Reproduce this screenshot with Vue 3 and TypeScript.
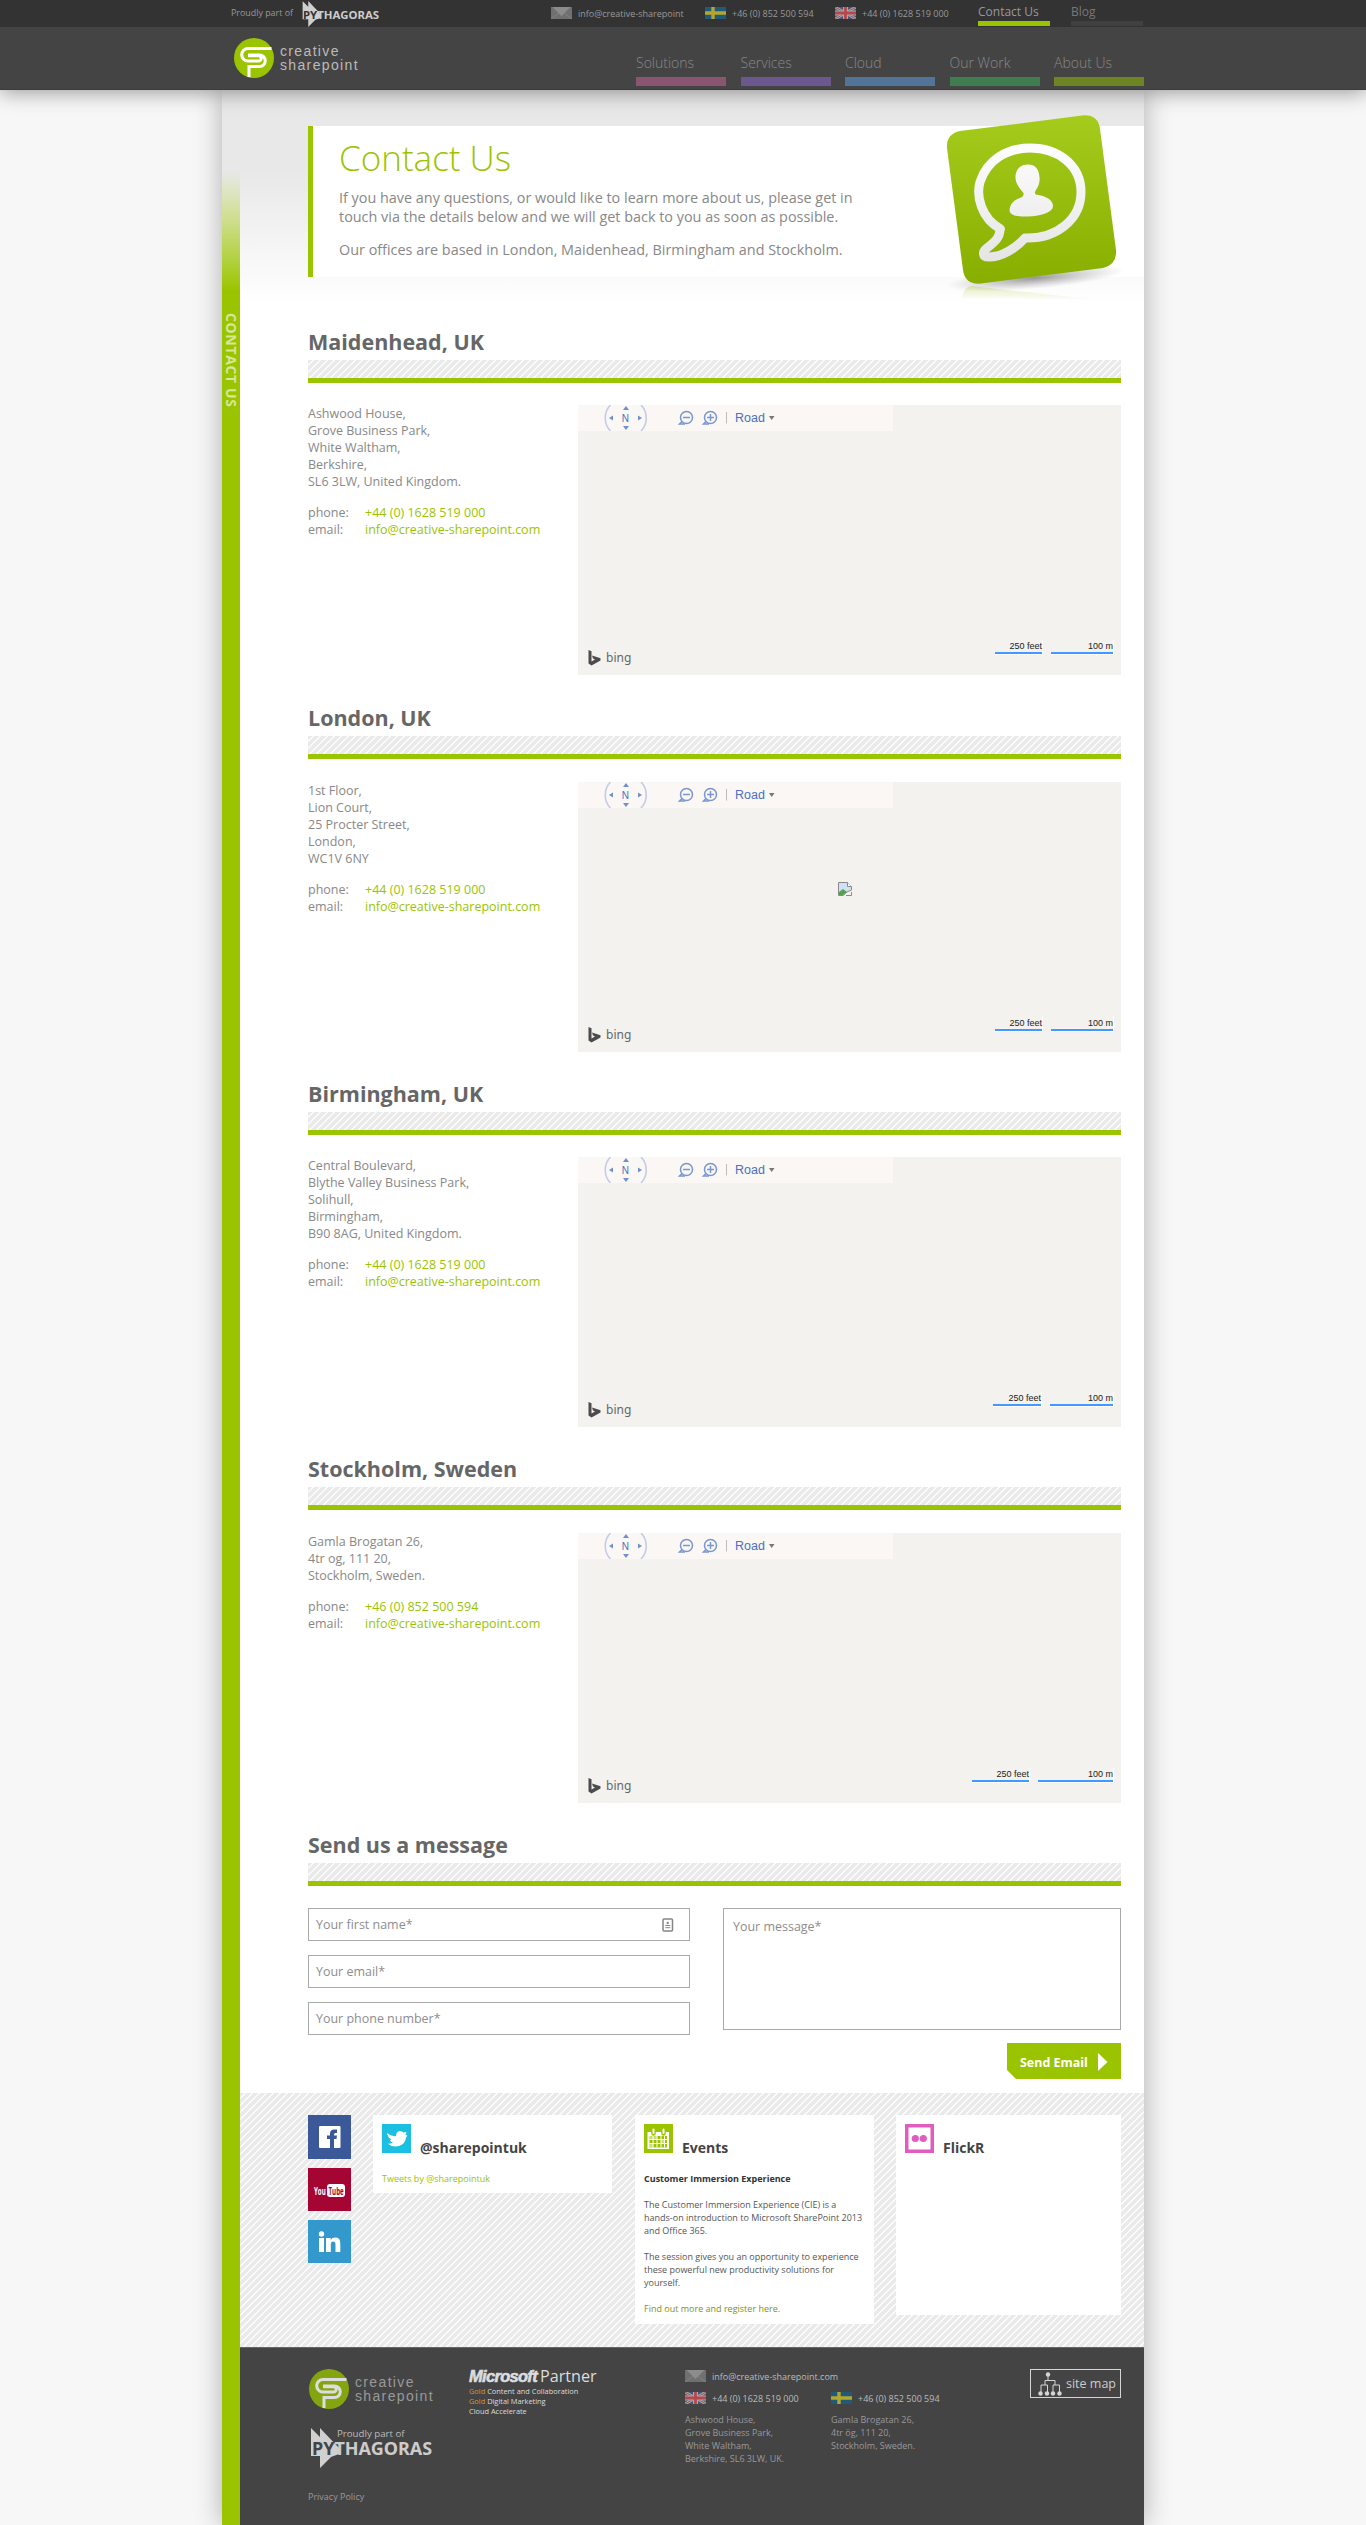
<script setup lang="ts">
interface Office {
  title: string
  address: string[]
  phone: string
  feet: number
  metres: number
  broken?: boolean
}

const offices: Office[] = [
  { title: 'Maidenhead, UK', address: ['Ashwood House,', 'Grove Business Park,', 'White Waltham,', 'Berkshire,', 'SL6 3LW, United Kingdom.'], phone: '+44 (0) 1628 519 000', feet: 47, metres: 62 },
  { title: 'London, UK', address: ['1st Floor,', 'Lion Court,', '25 Procter Street,', 'London,', 'WC1V 6NY'], phone: '+44 (0) 1628 519 000', feet: 47, metres: 62, broken: true },
  { title: 'Birmingham, UK', address: ['Central Boulevard,', 'Blythe Valley Business Park,', 'Solihull,', 'Birmingham,', 'B90 8AG, United Kingdom.'], phone: '+44 (0) 1628 519 000', feet: 48, metres: 63 },
  { title: 'Stockholm, Sweden', address: ['Gamla Brogatan 26,', '4tr og, 111 20,', 'Stockholm, Sweden.'], phone: '+46 (0) 852 500 594', feet: 57, metres: 75 },
]

const nav = [
  { label: 'Solutions', color: '#8a5570' },
  { label: 'Services', color: '#6c578f' },
  { label: 'Cloud', color: '#527497' },
  { label: 'Our Work', color: '#3f7d50' },
  { label: 'About Us', color: '#6f8422' },
]
</script>

<template>
  <svg width="0" height="0" class="defs">
    <symbol id="mail" viewBox="0 0 21 12">
      <rect width="21" height="12" fill="#707070" />
      <path d="M0 12L8 6M21 12L13 6" stroke="#858585" stroke-width=".8" />
      <path d="M1.5 0H19.5L10.5 9Z" fill="#8c8c8c" />
    </symbol>
    <symbol id="se" viewBox="0 0 21 12">
      <rect width="21" height="12" fill="#20597a" />
      <path d="M8 0V12M0 6H21" stroke="#b5a62b" stroke-width="3.4" />
    </symbol>
    <symbol id="uk" viewBox="0 0 21 12">
      <rect width="21" height="12" fill="#3c5a80" />
      <path d="M0 0L21 12M21 0L0 12" stroke="#a9a9a9" stroke-width="2.8" />
      <path d="M0 0L21 12M21 0L0 12" stroke="#b04c50" stroke-width="1" />
      <path d="M10.5 0V12M0 6H21" stroke="#a9a9a9" stroke-width="5" />
      <path d="M10.5 0V12M0 6H21" stroke="#b8474c" stroke-width="2.8" />
    </symbol>
    <symbol id="arrow" viewBox="0 0 28 40">
      <path d="M0 0L9 9V0L28 20V26L20 29L9 40V28H0Z" />
    </symbol>
    <symbol id="sp" viewBox="0 0 40 40">
      <circle cx="20" cy="20" r="20" />
      <path d="M37.500 10.500H14a6.300 6.300 0 0 0 0 12.600H24.500a2.700 2.700 0 0 0 0-5.400H14M14 17H25.500a5.600 5.600 0 0 1 0 11.500H15V39" fill="none" stroke="currentColor" stroke-width="3" />
    </symbol>
  </svg>

  <header class="top">
    <div class="bar">
      <span class="part">Proudly part of</span>
      <span class="pyth">
        <svg class="pa" viewBox="0 0 28 40"><use href="#arrow" fill="#cfcfcf" /></svg>
        <b><i>PY</i>THAGORAS</b>
      </span>
      <span class="c c1"><svg><use href="#mail" /></svg><span>info@creative-sharepoint</span></span>
      <span class="c c2"><svg><use href="#se" /></svg><span>+46 (0) 852 500 594</span></span>
      <span class="c c3"><svg><use href="#uk" /></svg><span>+44 (0) 1628 519 000</span></span>
      <span class="tab on">Contact Us</span>
      <span class="tab">Blog</span>
    </div>
    <div class="nav">
      <div class="logo">
        <svg width="40" height="40" viewBox="0 0 40 40" fill="#9bc400" color="#fff"><use href="#sp" /></svg>
        <div>creative<br>sharepoint</div>
      </div>
      <a v-for="n in nav" :key="n.label" :style="{ borderColor: n.color }">{{ n.label }}</a>
    </div>
  </header>

  <div class="page">
    <div class="rail"><span>CONTACT US</span></div>
    <main>
      <section class="hero">
        <h1>Contact Us</h1>
        <p>If you have any questions, or would like to learn more about us, please get in<br>touch via the details below and we will get back to you as soon as possible.</p>
        <p>Our offices are based in London, Maidenhead, Birmingham and Stockholm.</p>
        <svg class="badge" width="200" height="200" viewBox="0 0 200 200">
          <defs>
            <linearGradient id="gg" x1="0" y1="0" x2="0" y2="1"><stop offset="0" stop-color="#a5cb1d" /><stop offset="1" stop-color="#88ae00" /></linearGradient>
            <linearGradient id="gw" gradientUnits="userSpaceOnUse" x1="0" y1="40" x2="0" y2="160"><stop offset="0" stop-color="#fcfcfc" /><stop offset="1" stop-color="#e2e2e2" /></linearGradient>
            <radialGradient id="sh"><stop offset="0" stop-color="#555" stop-opacity=".6" /><stop offset="1" stop-color="#888" stop-opacity="0" /></radialGradient>
            <linearGradient id="rf" x1="0" y1="0" x2="0" y2="1"><stop offset="0" stop-color="#9bc400" stop-opacity=".25" /><stop offset="1" stop-color="#9bc400" stop-opacity="0" /></linearGradient>
          </defs>
          <path d="M22 184Q24 172 32 172Q100 180 165 186Z" fill="url(#rf)" />
          <ellipse cx="95" cy="164" rx="90" ry="11" fill="url(#sh)" transform="rotate(-5 95 164)" />
          <path d="M20 17L142 1.500Q158 0 160 15L176 136Q177 151 163 154L41 169.500Q25 171 23 156L7 34Q6 20 20 17Z" fill="url(#gg)" />
          <path d="M60.500 115C41 104 36 82 40 68C47 46 67 34 90 34C119 34 141 52 141 78C141 105 117 125 85 124C76 134 62 143 49 143C42 143 42 138 47 134C56 127 60 123 60 115Z" fill="none" stroke="url(#gw)" stroke-width="9" stroke-linejoin="round" />
          <path d="M88 50.500C80 50.500 75 56 75.500 64C76 71 81 76 83.500 79C84 81 83 83 80 84C73 86 70 91 69.500 96C69.500 101 76 103 87 102.500C103 102 113 98 113 92C113 86 106 82 96 80.500C94 79 95 78 96 76C99 72 100 67 99.500 63C99 55 95 50.500 88 50.500Z" fill="url(#gw)" />
        </svg>
      </section>

      <section v-for="o in offices" :key="o.title" class="office">
        <h2>{{ o.title }}</h2>
        <div class="rule"></div>
        <div class="row" :class="{ low: o.broken }">
          <div class="info">
            <p><template v-for="l in o.address" :key="l">{{ l }}<br></template></p>
            <dl>
              <dt>phone:</dt><dd>{{ o.phone }}</dd>
              <dt>email:</dt><dd>info@creative-sharepoint.com</dd>
            </dl>
          </div>
          <div class="map">
            <div class="tools">
              <svg width="315" height="26" viewBox="0 0 315 26" fill="none">
                <path d="M32.500 0C25.500 7 25.500 19 32.500 26M63 0C70 7 70 19 63 26" stroke="#c3cde8" stroke-width="1.600" />
                <path d="M48 1L51 5H45ZM48 25L51 21H45ZM31 13L35 10.500V15.500ZM64 13L60 10.500V15.500Z" fill="#7090cc" />
                <g stroke="#7a97d0" stroke-width="1.500"><circle cx="108.500" cy="12.500" r="6" /><path d="M105 12.500H112M104 16.500L101.500 19H107" /><circle cx="132.500" cy="12.500" r="6" /><path d="M129 12.500H136M132.500 9V16M128 16.500L125.500 19H131" /></g>
                <path d="M148.500 7V18.500" stroke="#bbb" /><path d="M191 11H196.500L193.700 15Z" fill="#777" />
                <text x="43.800" y="16.500" font-family="Liberation Sans, sans-serif" font-size="10" fill="#4a70c0">N</text>
                <text x="157" y="17.200" font-family="Liberation Sans, sans-serif" font-size="12.500" fill="#4a70c0">Road</text>
              </svg>
            </div>
            <svg v-if="o.broken" class="broken" width="16" height="16" viewBox="0 0 16 16">
              <path d="M1.500 1.500H10.500L14.500 5.500V9L10 11L6 14.500H1.500Z" fill="#cfe0f7" stroke="#8a8a8a" />
              <path d="M2 14V11L6 8L10 11L6 14Z" fill="#4ca64c" /><path d="M10.500 1.500V5.500H14.500" fill="#fff" stroke="#8a8a8a" />
              <path d="M14.500 11V14.500H9" fill="none" stroke="#8a8a8a" />
            </svg>
            <div class="foot">
              <svg width="14" height="16" viewBox="0 0 14 16"><path d="M.5 0L3.500 1.200V11.500L7 9.500L5 8.500L4 5.500L12.500 8.200V10.500L3.500 15.500L.5 13.500Z" fill="#4c4c4c" /></svg>
              <span class="bing">bing</span>
              <span class="scale" :style="{ width: o.feet + 'px' }">250 feet</span>
              <span class="scale" :style="{ width: o.metres + 'px' }">100 m</span>
            </div>
          </div>
        </div>
      </section>

      <section class="office msg">
        <h2>Send us a message</h2>
        <div class="rule"></div>
        <div class="form">
          <div class="fields">
            <div class="in">Your first name*
              <svg width="12" height="14" viewBox="0 0 12 14"><rect x="1" y="1" width="9.500" height="12" rx="1" fill="#fff" stroke="#858585" stroke-width="1.500" /><circle cx="5.700" cy="5" r="1.200" fill="#858585" /><path d="M3.300 7.500H8.200M3.300 9.700H8.200" stroke="#858585" /></svg>
            </div>
            <div class="in">Your email*</div>
            <div class="in">Your phone number*</div>
          </div>
          <div class="right">
            <div class="area">Your message*</div>
            <div class="send"><span>Send Email</span><svg width="10" height="18" viewBox="0 0 10 18"><path d="M0 0L9.500 9L0 18Z" fill="#fff" /></svg></div>
          </div>
        </div>
      </section>

      <section class="social">
        <div class="icons">
          <svg width="43" height="44" viewBox="0 0 43 44"><rect width="43" height="44" fill="#3b5998" /><rect x="11" y="11" width="21.500" height="22" rx="1" fill="#fff" /><path d="M22 33V24H19V20.500H22V18.500Q22 14.500 26.500 14.500H29V18H27.500Q26 18 26 19.500V20.500H29L28.500 24H26V33Z" fill="#3b5998" /></svg>
          <svg width="43" height="43" viewBox="0 0 43 43"><rect width="43" height="43" fill="#a50533" /><rect x="19" y="16" width="18" height="13" rx="3" fill="#fff" /><g class="yt" font-size="10"><text transform="translate(6 26.500) scale(.62 1)" fill="#fff">You</text><text transform="translate(20.500 26.500) scale(.62 1)" fill="#a50533">Tube</text></g></svg>
          <svg width="43" height="43" viewBox="0 0 43 43"><rect width="43" height="43" fill="#3399cc" /><circle cx="13.500" cy="14" r="2.700" fill="#fff" /><path d="M11 18H16V32H11ZM18 18H22.700V20Q24 17.600 27.500 17.600Q32.300 17.600 32.300 23.500V32H27.500V24.500Q27.500 21.500 25.200 21.500Q22.800 21.500 22.800 24.500V32H18Z" fill="#fff" /></svg>
        </div>
        <div class="card tw">
          <h3><svg width="29" height="29" viewBox="0 0 29 29"><rect width="29" height="29" fill="#1bbfe2" /><path d="M5 9Q10 13 14 12Q14 7.500 18 7Q20 7 21.500 8.500L24.500 8L23.500 11L25.500 11.500L24 13.500Q23.500 20 17 22Q10 23.500 5.500 19.500Q9 20 11 18.500Q8.500 18 8 16L9.500 15.500Q6 14 5 9Z" fill="#fff" /></svg>@sharepointuk</h3>
          <p class="lime">Tweets by @sharepointuk</p>
        </div>
        <div class="card ev">
          <h3><svg width="29" height="29" viewBox="0 0 29 29"><rect width="29" height="29" fill="#9bc400" /><path d="M3.500 8H25V25H3.500Z" fill="#fff" /><path d="M5.500 12H23V23.500H5.500Z" fill="#9bc400" /><path d="M5.500 12H9V15.500H5.500ZM17 16H20.500V19.500H17ZM9 12H13V15H9ZM5.500 19.500H9V23.500H5.500Z" fill="#fff" opacity=".45" /><path d="M5.500 15.500H23M5.500 19.500H23M9 12V23.500M13 12V23.500M17 12V23.500M20.500 12V23.500" stroke="#fff" stroke-width="1" /><path d="M9.500 4.500V9.500M19.500 4.500V9.500" stroke="#9bc400" stroke-width="4.500" stroke-linecap="round" /><path d="M9.500 5.500V9M19.500 5.500V9" stroke="#fff" stroke-width="2" stroke-linecap="round" /></svg>Events</h3>
          <p><b>Customer Immersion Experience</b></p>
          <p>The Customer Immersion Experience (CIE) is a<br>hands-on introduction to Microsoft SharePoint 2013<br>and Office 365.</p>
          <p>The session gives you an opportunity to experience<br>these powerful new productivity solutions for<br>yourself.</p>
          <p class="olive">Find out more and register here.</p>
        </div>
        <div class="card fl">
          <h3><svg width="29" height="29" viewBox="0 0 29 29"><rect width="29" height="29" fill="#e05cc0" /><rect x="3.500" y="3.500" width="22" height="22" fill="#fff" /><circle cx="10.300" cy="14.500" r="3.600" fill="#e05cc0" /><circle cx="18.300" cy="14.500" r="3.600" fill="#e05cc0" /></svg>FlickR</h3>
        </div>
      </section>

      <footer>
        <div class="brand">
          <div class="logo dim">
            <svg width="40" height="40" viewBox="0 0 40 40" fill="#84a510" color="#ddd"><use href="#sp" /></svg>
            <div>creative<br>sharepoint</div>
          </div>
          <div class="pyth big">
            <svg class="pa" viewBox="0 0 28 40"><use href="#arrow" fill="#d0d0d0" /></svg>
            <em>Proudly part of</em>
            <b><i>PY</i>THAGORAS</b>
          </div>
          <a class="priv">Privacy Policy</a>
        </div>
        <div class="ms">
          <div class="mst"><b>Microsoft</b><span>Partner</span></div>
          <div><i>Gold</i> Content and Collaboration</div>
          <div><i>Gold</i> Digital Marketing</div>
          <div>Cloud Accelerate</div>
        </div>
        <div class="addr">
          <div class="c"><svg><use href="#mail" /></svg><span>info@creative-sharepoint.com</span></div>
          <div class="c"><svg><use href="#uk" /></svg><span>+44 (0) 1628 519 000</span></div>
          <p>Ashwood House,<br>Grove Business Park,<br>White Waltham,<br>Berkshire, SL6 3LW, UK.</p>
        </div>
        <div class="addr se">
          <div class="c"><svg><use href="#se" /></svg><span>+46 (0) 852 500 594</span></div>
          <p>Gamla Brogatan 26,<br>4tr ög, 111 20,<br>Stockholm, Sweden.</p>
        </div>
        <div class="map-link">
          <svg width="24" height="24" viewBox="0 0 24 24" fill="none" stroke="#d5d5d5"><path d="M10 4V8M7 13V8.500H17V13M3 20V13H9.500V20M15 20V13H21.500V20" /><g fill="#d5d5d5" stroke="none"><circle cx="10" cy="2.500" r="2.200" /><circle cx="2.500" cy="21.500" r="2.200" /><circle cx="9" cy="21.500" r="2.200" /><circle cx="15" cy="21.500" r="2.200" /><circle cx="21.500" cy="21.500" r="2.200" /></g></svg>
          <span>site map</span>
        </div>
      </footer>
    </main>
  </div>
</template>

<style>
body { background: #f7f7f7; font-family: "Open Sans", sans-serif; }
#app { position: relative; }
</style>

<style scoped>
* { box-sizing: border-box; }
h1, h2, h3, p, dl, dd { margin: 0; }
i, em { font-style: normal; }
.defs { position: absolute; }
.top { position: relative; z-index: 2; height: 90px; background: #444; box-shadow: 0 2px 20px rgba(0, 0, 0, .4); border-bottom: 1px solid #3c3a3c; }
.bar { height: 27px; background: #333; padding-left: 231px; display: flex; color: #999; font-size: 9px; white-space: nowrap; }
.part { width: 71px; line-height: 25px; font-size: 8.900px; }
.pyth { position: relative; width: 249px; }
.pyth .pa { position: absolute; left: 0; top: 1px; width: 19px; height: 26px; }
.pyth b { position: absolute; left: 1px; top: 8px; font: 700 11.400px/13px "Noto Sans", sans-serif; color: #ccc; letter-spacing: 0; }
.pyth b i { color: #333; }
.c { display: flex; align-items: center; }
.c svg { flex: none; width: 21px; height: 12px; margin-right: 6px; }
.bar .c { height: 26px; }
.c1 { width: 154px; }
.c2 { width: 130px; }
.c3 { width: 143px; }
.tab { width: 72px; height: 26px; margin-right: 21px; border-bottom: 5px solid #404040; font-size: 12px; line-height: 23px; color: #777; }
.tab.on { border-color: #9bc400; color: #999; }
.nav { height: 62px; padding: 0 0 0 234px; display: flex; }
.nav a { width: 90px; height: 59px; margin-right: 14.500px; padding-top: 26px; border-bottom: 9px solid; font-size: 14px; line-height: 20px; font-weight: 300; color: #888; }
.logo { display: flex; width: 402px; padding-top: 11px; color: #bbb; font: 14px/14px "Liberation Sans", sans-serif; letter-spacing: 1.350px; }
.logo div { padding: 6px 0 0 6px; }

.page { position: relative; width: 922px; height: 2435px; margin-left: 222px; display: flex; background: linear-gradient(#e8e8e8, #e8e8e8 80px, #fff 215px); box-shadow: 0 0 26px rgba(0, 0, 0, .3); }
.rail { width: 18px; background: linear-gradient(rgba(155, 196, 0, 0) 80px, #9bc400 200px); padding-top: 223px; }
.rail span { display: block; writing-mode: vertical-rl; font-weight: 700; font-size: 14px; line-height: 18px; letter-spacing: .65px; color: rgba(255, 255, 255, .6); }
main { width: 904px; }
.hero { position: relative; margin: 36px 0 0 68px; height: 151px; border-left: 5px solid #9bc400; background: #fff; padding-left: 26px; color: #888; font-size: 14.400px; line-height: 19px; }
.hero h1 { font-weight: 300; font-size: 35px; line-height: 38px; color: #9bc400; padding-top: 13px; margin-bottom: 11px; }
.hero p { margin-bottom: 14px; }
.badge { position: absolute; left: 627px; top: -12px; }

.office { margin-left: 68px; width: 813px; height: 375.750px; }
.hero + .office { margin-top: 48px; }
.office h2 { height: 35px; font-size: 21.500px; line-height: 34px; color: #666; }
.rule { height: 23px; border-bottom: 5px solid #9bc400; }
.rule, .social { background-image: repeating-linear-gradient(135deg, #eaeaea 0, #eaeaea 3px, #fcfcfc 3.500px, #fcfcfc 4.200px, #eaeaea 4.950px); }
.row { display: flex; margin-top: 22.400px; }
.row.low { margin-top: 23px; }
.info { width: 270px; font-size: 12.500px; line-height: 17px; color: #888; }
.info dl { display: grid; grid-template-columns: 57px 1fr; margin-top: 14px; }
.info dd { color: #9bc400; }
.map { position: relative; width: 543px; height: 270px; background: #f3f2ee; display: flex; flex-direction: column; justify-content: space-between; }
.tools { width: 315px; height: 26px; background: #faf7f4; }
.broken { position: absolute; left: 259px; top: 99px; }
.foot { display: flex; align-items: flex-start; height: 25px; padding: 0 7px 0 10px; }
.bing { margin: -1px auto 0 4px; font: 12px/18px "Noto Sans", sans-serif; color: #666; }
.scale { margin: -10px 1px 0 8px; border-bottom: 2px solid #4499ff; box-shadow: 0 1px #fff, 1px 0 #fff; text-align: right; font: 9px/12px "Liberation Sans", sans-serif; color: #222; }

.msg { height: 265px; }
.form { display: flex; margin-top: 22px; gap: 33px; font-size: 12.480px; color: #8d8d8d; }
.fields { width: 382px; }
.in { height: 33px; margin-bottom: 14px; border: 1px solid #aaa; background: #fff; padding: 0 15px 0 7px; line-height: 31px; display: flex; justify-content: space-between; align-items: center; }
.right { width: 398px; }
.area { height: 122px; border: 1px solid #aaa; background: #fff; padding: 9px; line-height: 17px; }
.send { width: 114px; height: 36px; margin: 13px 0 0 auto; display: flex; align-items: center; justify-content: space-between; padding: 2px 13px 0; background: #9bc400; color: #fff; font-weight: 700; font-size: 12.480px; clip-path: polygon(0 0, 100% 0, 100% 100%, 9px 100%, 0 27px); }

.social { height: 254px; padding: 22px 0 0 68px; display: flex; align-items: flex-start; }
.icons { width: 65px; display: flex; flex-direction: column; gap: 9px; }
.icons svg { display: block; }
.yt { font-family: "Open Sans", sans-serif; font-weight: 700; }
.card { width: 239px; margin-right: 23px; background: #fff; padding: 9px; color: #555; font-size: 9px; line-height: 13px; }
.card h3 { display: flex; align-items: flex-start; gap: 9px; font-size: 14px; line-height: 19px; height: 47.500px; color: #444; padding-top: 14px; }
.card h3 svg { margin-top: -14px; }
.card p { margin-bottom: 13.200px; white-space: nowrap; }
.card b { color: #333; }
.tw { height: 78px; }
.ev { height: 209px; margin-right: 22px; }
.fl { width: 225px; height: 200px; margin: 0; }
.lime { color: #9bc400; }
.olive { color: #7a9420; }

footer { height: 178px; border-top: 1px solid #666; background: #444; padding: 21px 23px 0 68px; display: flex; color: #999; font-size: 9px; line-height: 13px; white-space: nowrap; }
.brand { width: 161px; }
.dim { padding: 0 0 0 1px; width: 160px; color: #999; }
.big { width: 130px; height: 43px; margin: 18px 0 0 3px; }
.big .pa { top: 1px; width: 28px; height: 40px; }
.big em { position: absolute; left: 26px; top: 0; font-size: 9.700px; line-height: 14px; color: #bbb; }
.big b { top: 11px; font-size: 18px; line-height: 20px; letter-spacing: 0; }
.big b i { color: #444; }
.priv { display: block; margin-top: 20px; }
.ms { width: 216px; font-size: 7.400px; line-height: 10.200px; color: #ddd; }
.ms i { color: #d39a30; }
.mst { font-size: 16.200px; line-height: 15px; margin-bottom: 2px; }
.mst b { font: italic 700 16.500px/15px "Liberation Sans", sans-serif; letter-spacing: -.7px; margin-right: 3px; -webkit-text-stroke: .6px #ddd; }
.addr { width: 146px; }
.addr .c { height: 14px; margin-bottom: 8px; color: #bbb; }
.addr .c span { flex: none; }
.addr.se { margin-top: 22px; width: 199px; }
.map-link { width: 91px; height: 29px; border: 1px solid #d5d5d5; display: flex; padding: 2px 0 0 7px; gap: 4px; color: #ccc; font-size: 12.500px; line-height: 24px; }
</style>
